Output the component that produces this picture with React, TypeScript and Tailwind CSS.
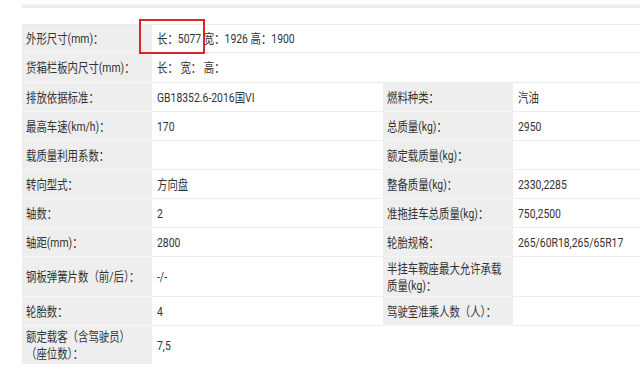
import type { ReactNode } from 'react';

type Cell = { label: ReactNode; value?: ReactNode };
type Row = { h: string; cells: Cell[]; wide?: boolean; last?: boolean };

// spec sheet rows; heights follow the rendered table
const rows: Row[] = [
  { h: 'h-[28px]', wide: true, cells: [{ label: '外形尺寸(mm)：', value: '长：5077 宽：1926 高：1900' }] },
  { h: 'h-[30px]', wide: true, cells: [{ label: '货箱栏板内尺寸(mm)：', value: '长： 宽： 高：' }] },
  { h: 'h-[29px]', cells: [{ label: '排放依据标准：', value: 'GB18352.6-2016国VI' }, { label: '燃料种类：', value: '汽油' }] },
  { h: 'h-[29px]', cells: [{ label: '最高车速(km/h)：', value: '170' }, { label: '总质量(kg)：', value: '2950' }] },
  { h: 'h-[29px]', cells: [{ label: '载质量利用系数：' }, { label: '额定载质量(kg)：' }] },
  { h: 'h-[29px]', cells: [{ label: '转向型式：', value: '方向盘' }, { label: '整备质量(kg)：', value: '2330,2285' }] },
  { h: 'h-[29px]', cells: [{ label: '轴数：', value: '2' }, { label: '准拖挂车总质量(kg)：', value: '750,2500' }] },
  { h: 'h-[29px]', cells: [{ label: '轴距(mm)：', value: '2800' }, { label: '轮胎规格：', value: '265/60R18,265/65R17' }] },
  {
    h: 'h-[40px]',
    cells: [
      { label: '钢板弹簧片数（前/后）：', value: '-/-' },
      { label: <>半挂车鞍座最大允许承载<br />质量(kg)：</> },
    ],
  },
  { h: 'h-[29px]', cells: [{ label: '轮胎数：', value: '4' }, { label: '驾驶室准乘人数（人）：' }] },
  { h: 'h-[38px]', last: true, cells: [{ label: <>额定载客（含驾驶员）<br />（座位数）：</>, value: '7,5' }] },
];

function Txt({ children }: { children?: ReactNode }) {
  return <span className="inline-block origin-left scale-x-[0.8] whitespace-nowrap leading-[17px]">{children}</span>;
}

export default function App() {
  return (
    <div className="relative h-[390px] w-[640px] overflow-hidden bg-white font-['Roboto','Noto_Sans_CJK_SC',sans-serif] text-[13px] text-[#333]">
      <div className="ml-[22px] mt-[4px] h-[4px] bg-gradient-to-b from-[#f4f4f4] to-[#e9e9e9]" />
      <div className="ml-[22px] mt-[16px] overflow-hidden">
        <div className="grid w-[722px] grid-cols-[130px_231px_130px_231px] border-t border-[#ececec]">
          {rows.map((r, i) => {
            const line = r.last ? '' : 'border-b';
            return (
              <div key={i} className="contents">
                {r.cells.map((c, j) => (
                  <div key={j} className="contents">
                    <div className={`${r.h} ${line} flex items-center border-[#f6f6f6] bg-[#eeeeee] pl-[4px]`}>
                      <Txt>{c.label}</Txt>
                    </div>
                    <div
                      className={`${r.h} ${line} flex items-center border-[#ececec] pl-[5px] ${r.wide ? 'col-span-3' : ''}`}
                    >
                      <Txt>{c.value}</Txt>
                    </div>
                  </div>
                ))}
                {r.last && <div className="col-span-2" />}
              </div>
            );
          })}
        </div>
      </div>
      <div className="absolute left-[139px] top-[19px] h-[35px] w-[66px] border-2 border-[#d8262b]" />
    </div>
  );
}
